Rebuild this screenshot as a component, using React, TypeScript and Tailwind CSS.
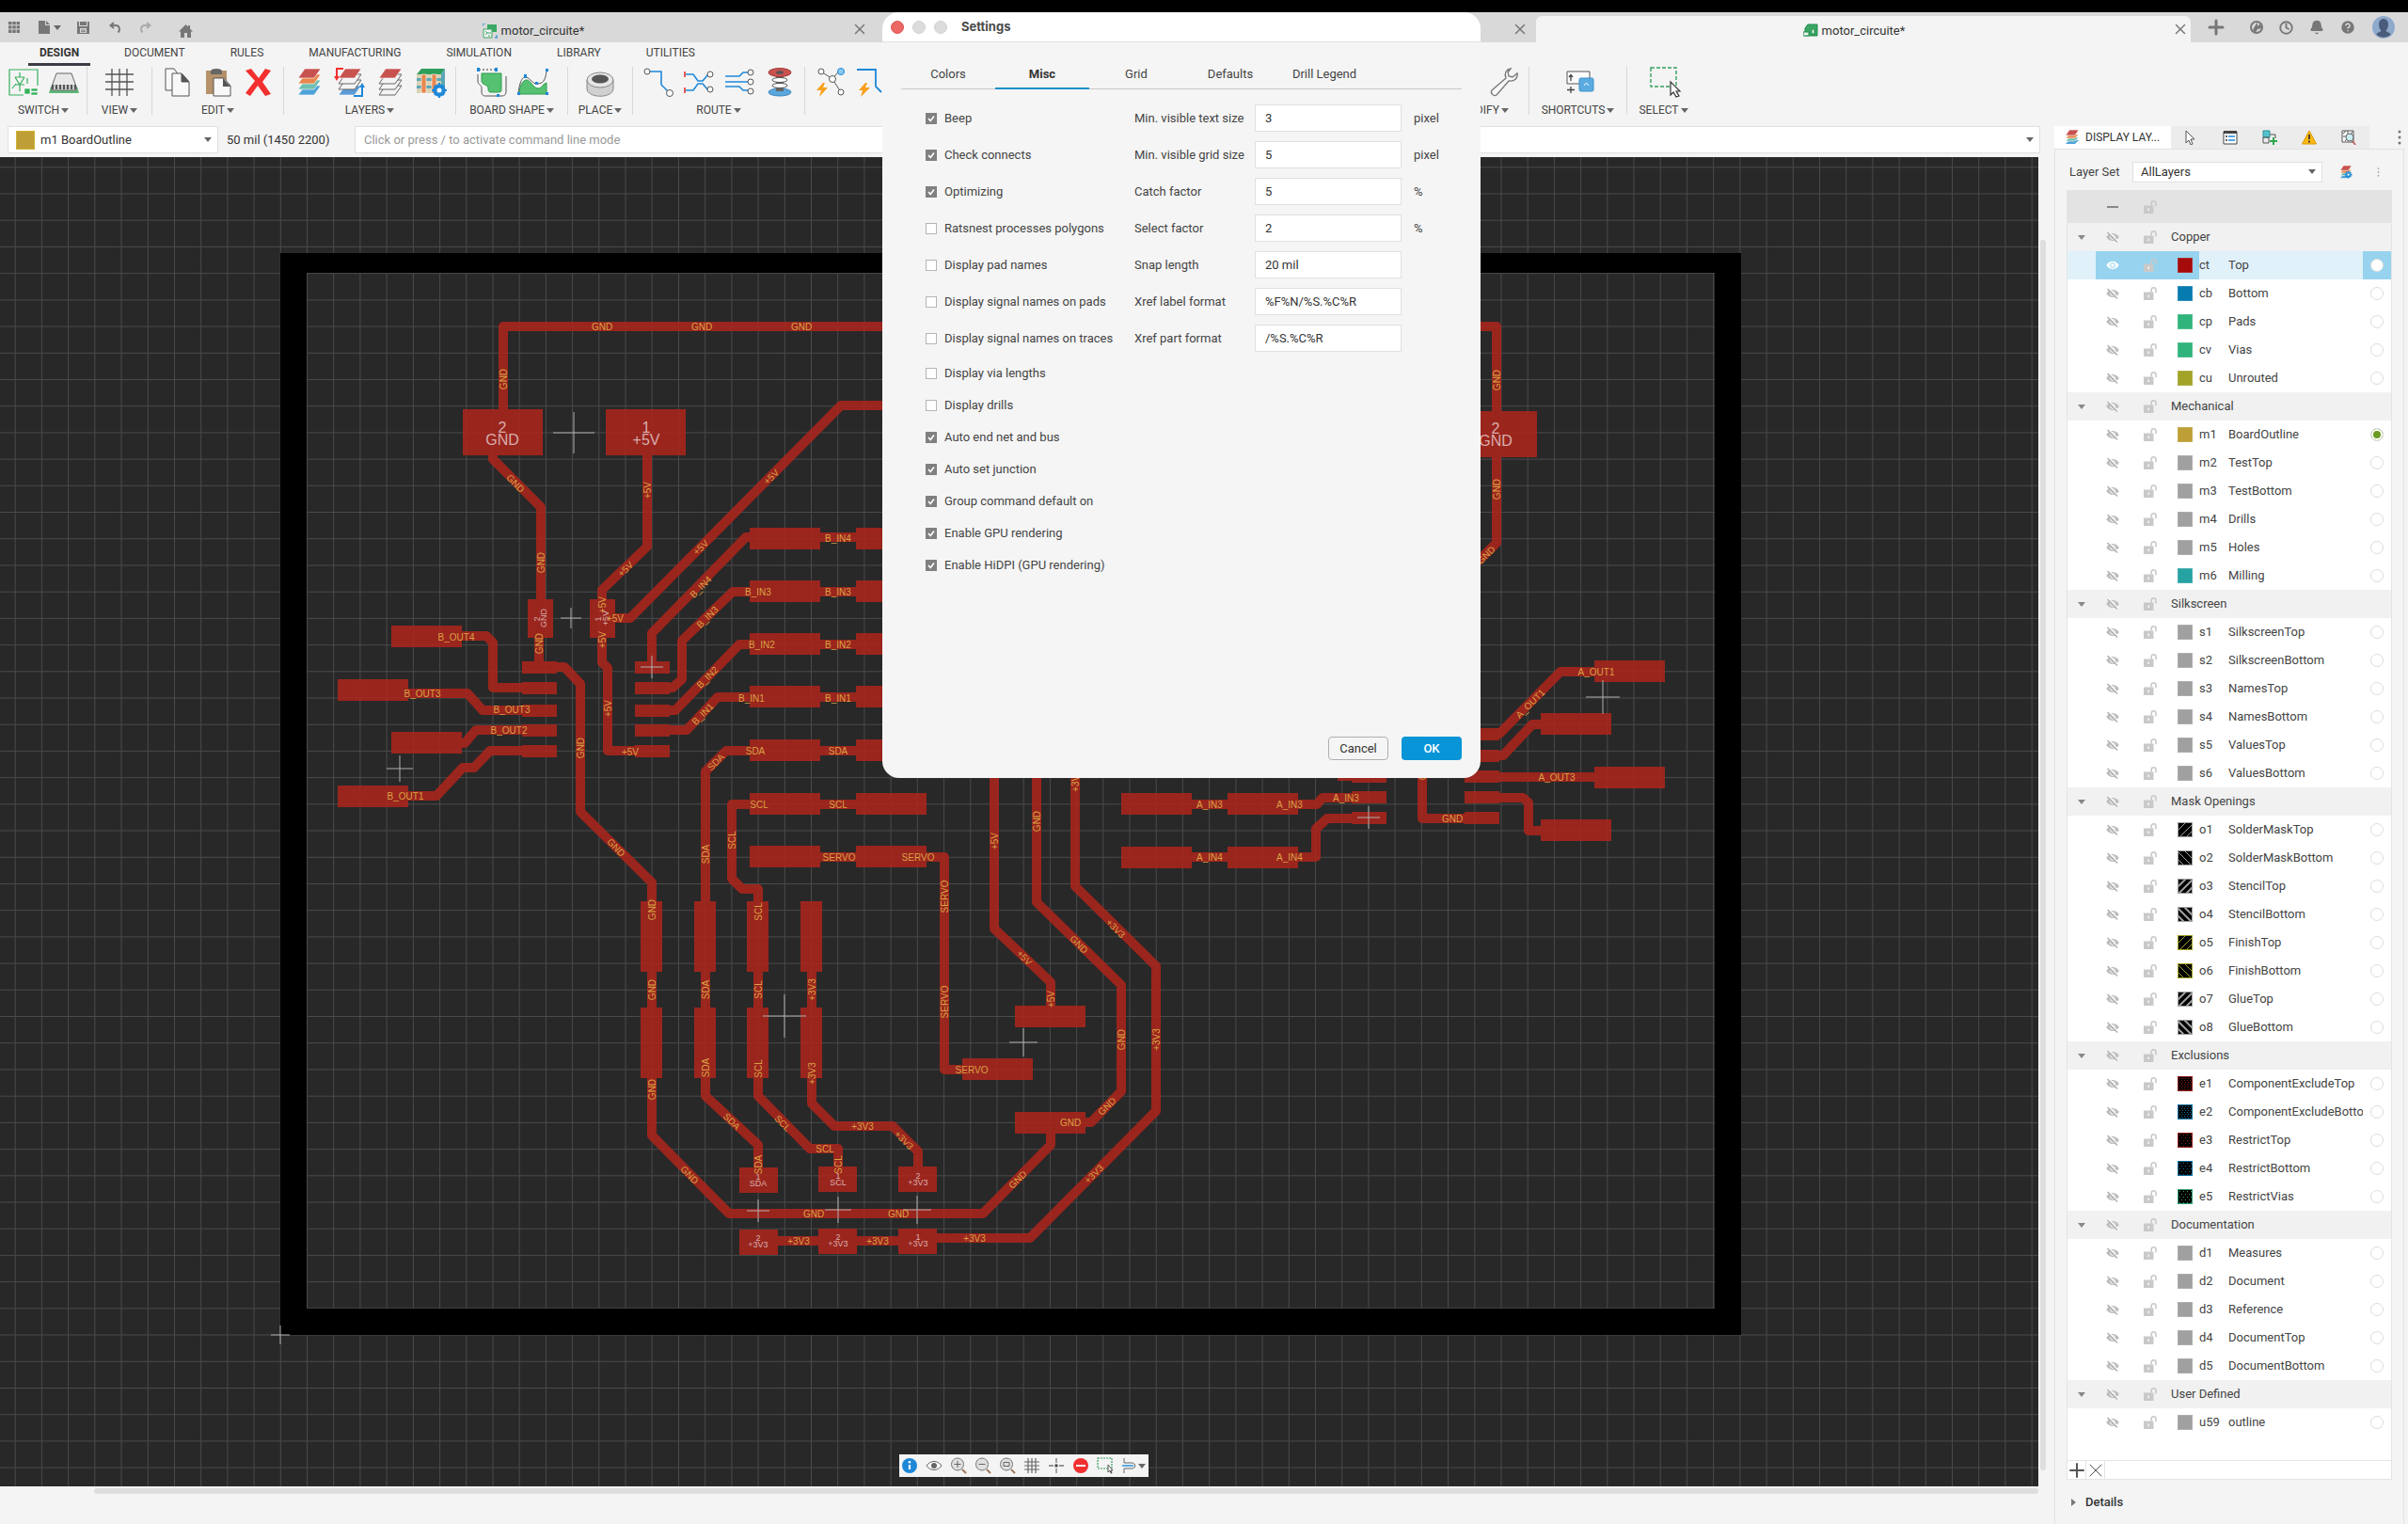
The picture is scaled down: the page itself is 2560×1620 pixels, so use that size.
import React from 'react';
import { Clock, HelpCircle, Bell, Plus, X } from 'lucide-react';

type Swatch = { color: string; kind?: 'solid' | 'slash' | 'backslash' | 'slashWide' | 'backslashWide' | 'dots' | 'dotsSparse' };
type Layer = { code: string; name: string; swatch: Swatch };
type LayerGroup = { name: string; layers: Layer[] };
type Label = [number, number, number, string];

const GRAY = '#a0a0a0';

const solid = (code: string, name: string, color = GRAY): Layer => ({ code, name, swatch: { color, kind: 'solid' } });

const layerGroups: LayerGroup[] = [
  {
    name: 'Copper',
    layers: [
      solid('ct', 'Top', '#a50b0b'),
      solid('cb', 'Bottom', '#067bb0'),
      solid('cp', 'Pads', '#31b37c'),
      solid('cv', 'Vias', '#31b37c'),
      solid('cu', 'Unrouted', '#a3a328'),
    ],
  },
  {
    name: 'Mechanical',
    layers: [
      solid('m1', 'BoardOutline', '#bd9f36'),
      solid('m2', 'TestTop'),
      solid('m3', 'TestBottom'),
      solid('m4', 'Drills'),
      solid('m5', 'Holes'),
      solid('m6', 'Milling', '#27a2a2'),
    ],
  },
  {
    name: 'Silkscreen',
    layers: [
      solid('s1', 'SilkscreenTop'),
      solid('s2', 'SilkscreenBottom'),
      solid('s3', 'NamesTop'),
      solid('s4', 'NamesBottom'),
      solid('s5', 'ValuesTop'),
      solid('s6', 'ValuesBottom'),
    ],
  },
  {
    name: 'Mask Openings',
    layers: [
      { code: 'o1', name: 'SolderMaskTop', swatch: { color: GRAY, kind: 'slash' } },
      { code: 'o2', name: 'SolderMaskBottom', swatch: { color: GRAY, kind: 'backslash' } },
      { code: 'o3', name: 'StencilTop', swatch: { color: GRAY, kind: 'slashWide' } },
      { code: 'o4', name: 'StencilBottom', swatch: { color: GRAY, kind: 'backslashWide' } },
      { code: 'o5', name: 'FinishTop', swatch: { color: '#a3a328', kind: 'slash' } },
      { code: 'o6', name: 'FinishBottom', swatch: { color: '#a3a328', kind: 'backslash' } },
      { code: 'o7', name: 'GlueTop', swatch: { color: GRAY, kind: 'slashWide' } },
      { code: 'o8', name: 'GlueBottom', swatch: { color: GRAY, kind: 'backslashWide' } },
    ],
  },
  {
    name: 'Exclusions',
    layers: [
      { code: 'e1', name: 'ComponentExcludeTop', swatch: { color: '#8f1a1a', kind: 'dots' } },
      { code: 'e2', name: 'ComponentExcludeBottom', swatch: { color: '#0d6f9e', kind: 'dots' } },
      { code: 'e3', name: 'RestrictTop', swatch: { color: '#8f1a1a', kind: 'dotsSparse' } },
      { code: 'e4', name: 'RestrictBottom', swatch: { color: '#0d6f9e', kind: 'dotsSparse' } },
      { code: 'e5', name: 'RestrictVias', swatch: { color: '#31a070', kind: 'dotsSparse' } },
    ],
  },
  {
    name: 'Documentation',
    layers: [
      solid('d1', 'Measures'),
      solid('d2', 'Document'),
      solid('d3', 'Reference'),
      solid('d4', 'DocumentTop'),
      solid('d5', 'DocumentBottom'),
    ],
  },
  { name: 'User Defined', layers: [solid('u59', 'outline')] },
];

/* ---------- small icons ---------- */

const Caret = ({ className = 'text-[#666]' }: { className?: string }) => (
  <svg viewBox="0 0 8 5" className={`w-2 h-[5px] shrink-0 ${className}`} fill="currentColor">
    <path d="M0 0h8L4 5z" />
  </svg>
);

const EyeOff = () => (
  <svg viewBox="0 0 14 12" className="w-3.5 h-3 mx-auto" fill="none">
    <path d="M7 2c3 0 5.500 2 6.800 4C12.500 8 10 10 7 10S1.500 8 .2 6C1.500 4 4 2 7 2z" fill="#bdbdbd" />
    <circle cx="7" cy="6" r="2.300" stroke="#fff" strokeWidth="1" />
    <path d="M2.500 .5l10.500 10.500" stroke="#fff" strokeWidth="1.600" />
    <path d="M1.500 1l10.500 10.500" stroke="#adadad" strokeWidth="1.400" />
  </svg>
);

const EyeOn = () => (
  <svg viewBox="0 0 14 12" className="w-3.5 h-3 mx-auto" fill="none">
    <path d="M7 1.800c3 0 5.200 2 6.600 4.200C12.200 8.200 10 10.200 7 10.200S1.800 8.200.4 6C1.800 3.800 4 1.800 7 1.800z" fill="#fff" />
    <circle cx="7" cy="6" r="2.500" stroke="#97d3ee" strokeWidth="1" />
  </svg>
);

const Unlock = () => (
  <svg viewBox="0 0 14 14" className="w-3.5 h-3.5 mx-auto" fill="none">
    <path d="M0 5.500h10.500V14H0z" fill="#c9c9c9" />
    <path d="M8.200 5.500V3.200a2.400 2.400 0 0 1 4.800 0v3" stroke="#c9c9c9" strokeWidth="1.600" />
    <path d="M5.200 8.500v2.500" stroke="#fff" strokeWidth="1.300" />
  </svg>
);

const SwatchIcon = ({ swatch }: { swatch: Swatch }) => {
  const { color, kind } = swatch;
  const dots: string[] = [];
  const step = kind === 'dots' ? 3 : 4;
  for (let y = 2, row = 0; y < 15; y += step - 1, row++) {
    for (let x = row % 2 ? 4 : 2; x < 15; x += step) dots.push(`M${x} ${y}h1v1h-1z`);
  }
  return (
    <svg viewBox="0 0 16 16" className="w-4 h-4 mx-auto">
      <rect width="16" height="16" fill={kind === 'solid' ? color : '#000'} />
      {kind === 'slash' && <path d="M1 8l7-7M3 15L15 3M10 15l5-5" stroke={color} strokeWidth="1" />}
      {kind === 'backslash' && <path d="M8 1l7 7M1 2l13 13M1 10l5 5" stroke={color} strokeWidth="1" />}
      {kind === 'slashWide' && <path d="M0 9l9-9M1 16L16 1M9 16l7-7" stroke={color} strokeWidth="2" />}
      {kind === 'backslashWide' && <path d="M7 0l9 9M0 1l15 15M0 9l7 7" stroke={color} strokeWidth="2" />}
      {(kind === 'dots' || kind === 'dotsSparse') && <path d={dots.join('')} fill={color} />}
      <rect x=".5" y=".5" width="15" height="15" fill="none" stroke={kind === 'solid' ? 'rgba(255,255,255,.15)' : color} />
    </svg>
  );
};

const BoardFileIcon = ({ filled }: { filled?: boolean }) => (
  <svg viewBox="0 0 16 16" className="w-4 h-4 shrink-0" fill="none">
    {filled ? (
      <>
        <path d="M5 1h10v12H2V5z" fill="#3aa765" stroke="#1f8a4a" />
        <path d="M0 9h6v4H0zM9 6h3v5H9z" fill="#e8f5ec" stroke="#1f8a4a" />
      </>
    ) : (
      <>
        <path d="M5 1h10v8H5z" fill="#3aa765" />
        <path d="M1 6h9v9H1z" fill="#f4f4f4" stroke="#3aa765" />
        <path d="M3 8l2 2-2 2M5 10h4M7 12v2" stroke="#3aa765" />
        <path d="M0 0h3M0 0v3M13 15h3M15 12v3" stroke="#1e88d8" />
      </>
    )}
  </svg>
);

const LayerStack = ({ colors, children }: { colors: string[]; children?: React.ReactNode }) => (
  <g>
    {colors.map((c, i) => {
      const y = 24 - i * 6;
      return <path key={i} d={`M4 ${y + 6}l7-10h17l-7 10z`} fill={c} stroke={c === '#f4f4f4' ? '#666' : '#fff'} strokeWidth={c === '#f4f4f4' ? 1 : 0.6} />;
    })}
    {children}
  </g>
);

/* toolbar drawings, all on a 32x32 box */
const icons: Record<string, React.ReactNode> = {
  schematic: (
    <g stroke="#35b05c" fill="none" strokeWidth="1.200">
      <path d="M31 20V3H1v27h15" />
      <path d="M12 6v5M7 11h10M7 11l5 8 5-8M7 19h10M12 19v7M4 23l4-5M20 12v6" />
      <path d="M17 23h6v6h-6zM24 23h7v3h-7zM24 27h7v3h-7z" fill="#35b05c" stroke="#fff" strokeWidth=".6" />
    </g>
  ),
  board: (
    <g>
      <path d="M2 21h28l2 7H0z" fill="#5cb878" />
      <path d="M8 7h16l5 14v4H3v-4z" fill="#e8e8e8" stroke="#666" />
      <path d="M3 19h26v5H3z" fill="#555" />
      <path d="M6 18v6M10 18v6M14 18v6M18 18v6M22 18v6M26 18v6" stroke="#eee" strokeWidth="1.500" />
    </g>
  ),
  grid: <path d="M8 2v29M16 2v29M24 2v29M1 8h30M1 16h30M1 24h30" stroke="#555" strokeWidth="1.300" />,
  copy: (
    <g fill="#f8f8f8" stroke="#555">
      <path d="M3 2h9l5 7v16H3z" />
      <path d="M10 7h10l8 9v15H10z" />
      <path d="M20 7v9h8z" fill="#555" />
    </g>
  ),
  paste: (
    <g>
      <path d="M3 4h22v25H3z" fill="#b5926a" />
      <path d="M8 5c0-2 2-3 6-3s6 1 6 3v3H8z" fill="#666" />
      <path d="M11 12h11l7 8v11H11z" fill="#f8f8f8" stroke="#555" />
      <path d="M21 12v9h8z" fill="#555" />
    </g>
  ),
  delete: <path d="M2 4l6-2 8 10 7-10 6 2-9 12 9 13-6 2-8-11-8 11-5-3 10-13z" fill="#f2302f" />,
  stackAll: <LayerStack colors={['#4da3d8', '#6fbfb0', '#e8874e', '#c8524f']} />,
  stackFlip: (
    <LayerStack colors={['#5b9bd5', '#f4f4f4', '#f4f4f4', '#c8524f']}>
      <path d="M9 2H2v11" stroke="#f2302f" strokeWidth="2" fill="none" />
      <path d="M-1 10h6l-3 5z" fill="#f2302f" />
      <path d="M20 31h9V21" stroke="#1e88d8" strokeWidth="2" fill="none" />
      <path d="M26 22h6l-3-5z" fill="#1e88d8" />
    </LayerStack>
  ),
  stackTop: <LayerStack colors={['#f4f4f4', '#f4f4f4', '#f4f4f4', '#c8524f']} />,
  stackup: (
    <g>
      <path d="M1 8l5-6h25l-4 6z" fill="#2e9e5b" />
      <path d="M1 8h26v20H1z" fill="#d9d2b4" />
      <path d="M27 8l4-6v19l-4 7z" fill="#5aa7b5" />
      <path d="M1 12h26v3H1zM1 20h26v3H1z" fill="#5aa7b5" />
      <path d="M6 8h5v20H6zM17 8h5v20h-5z" fill="#e8874e" stroke="#fff" strokeWidth=".6" />
      <circle cx="25" cy="25" r="5" fill="none" stroke="#1e88d8" strokeWidth="3.500" />
      <path d="M25 17v16M17 25h16M20 20l10 10M30 20L20 30" stroke="#1e88d8" strokeWidth="2" />
      <circle cx="25" cy="25" r="2.500" fill="#fff" />
    </g>
  ),
  outline: (
    <g>
      <path d="M1 8v7c0 5 4 3 4 8v4c0 4 3 4 5 4h16c4 0 5-2 5-5V10" stroke="#555" fill="none" />
      <path d="M5 7h21v18c0 2-2 2-4 2h-7c-3 0-3-2-3-4 0-5-7-3-7-8z" fill="#56c271" stroke="#2f9950" />
      <path d="M2 3h18" stroke="#333" strokeDasharray="2 2" />
      <path d="M0 1h3v4H0zM19 1h3v4h-3zM21 29h3v3h-3z" fill="#1e88d8" />
    </g>
  ),
  polygon: (
    <g>
      <path d="M2 29C2 20 6 14 10 14s7 9 12 9c4 0 4-4 9-6v12z" fill="#56c271" stroke="#2f9950" />
      <path d="M1 29C2 16 6 9 10 11s6 7 11 7c6 0 9-3 10-14" stroke="#555" fill="none" />
      <path d="M0 27h3v3H0zM7 8h3v4H7zM19 16h3v3h-3zM30 2h3v3h-3zM30 27h3v3h-3z" fill="#1e88d8" />
    </g>
  ),
  via: (
    <g>
      <path d="M2 14v9c0 11 28 11 28 0v-9z" fill="#d0d0d0" stroke="#888" />
      <ellipse cx="16" cy="14" rx="14" ry="8" fill="#e6e6e6" stroke="#888" />
      <ellipse cx="16" cy="13" rx="9" ry="4.500" fill="#555" />
    </g>
  ),
  route: (
    <g>
      <path d="M4 5h15v14l8 8" fill="none" stroke="#1e88d8" strokeWidth="1.600" />
      <circle cx="4" cy="5" r="3" fill="#fff" stroke="#555" />
      <circle cx="28" cy="28" r="3.500" fill="#fff" stroke="#555" />
    </g>
  ),
  diffPair: (
    <g fill="none">
      <path d="M2 8h8l5 7h5l6-7M2 25h8l5-7h5l6 7" stroke="#1e88d8" strokeWidth="1.600" />
      <path d="M1 5v6M1 22v6" stroke="#e33" strokeWidth="1.600" />
      <circle cx="28" cy="8" r="3" fill="#fff" stroke="#555" />
      <circle cx="28" cy="24" r="3" fill="#fff" stroke="#555" />
    </g>
  ),
  multiRoute: (
    <g fill="none">
      <path d="M1 10h15l4-4h6M1 16h24M1 21h15l4 4h6" stroke="#1e88d8" strokeWidth="1.600" />
      <circle cx="28" cy="6" r="3" fill="#fff" stroke="#555" />
      <circle cx="28" cy="16" r="3" fill="#fff" stroke="#555" />
      <circle cx="28" cy="26" r="3" fill="#fff" stroke="#555" />
    </g>
  ),
  viaStack: (
    <g>
      <ellipse cx="16" cy="27" rx="12" ry="4" fill="#5aa7dd" stroke="#3a87bd" />
      <path d="M12 8h8v18h-8z" fill="#666" />
      <ellipse cx="16" cy="20" rx="8" ry="2.500" fill="#fff" stroke="#555" />
      <ellipse cx="16" cy="14" rx="8" ry="2.500" fill="#fff" stroke="#555" />
      <ellipse cx="16" cy="6" rx="12" ry="4.500" fill="#c8524f" stroke="#a33c3a" />
      <ellipse cx="16" cy="6" rx="4" ry="1.800" fill="#555" />
    </g>
  ),
  ratsnest: (
    <g>
      <path d="M6 5l12 8 8-10M18 13l9 14" stroke="#555" fill="none" />
      <circle cx="6" cy="5" r="3" fill="#fff" stroke="#555" />
      <circle cx="18" cy="13" r="3.500" fill="#fff" stroke="#555" />
      <circle cx="27" cy="5" r="3.500" fill="#8cc8f0" stroke="#1e88d8" />
      <circle cx="27" cy="27" r="3" fill="#fff" stroke="#555" />
      <path d="M8 17L1 25h5l-2 7 9-10H8l2-5z" fill="#f9a11b" />
    </g>
  ),
  quickRoute: (
    <g>
      <path d="M1 3h20v18l6 6" stroke="#1e88d8" strokeWidth="1.800" fill="none" />
      <path d="M10 17l-7 8h4l-2 7 10-10h-5l2-5z" fill="#f9a11b" />
    </g>
  ),
  wrench: (
    <path
      d="M22 2c-5 1-7 5-5 10L2 25c-2 3 2 7 5 5l13-15c6 1 10-3 9-8l-5 4-4-1-1-4z"
      fill="#f8f8f8"
      stroke="#777"
      strokeWidth="1.300"
      transform="translate(1 0)"
    />
  ),
  shortcuts: (
    <g>
      <path d="M17 18H4V5h24v8" fill="#fbfbfb" stroke="#555" />
      <path d="M8 15V8M6 11l2-2.500L10 11M8 21v7M4 24.500h8" stroke="#444" strokeWidth="1.300" fill="none" />
      <rect x="17" y="12" width="15" height="14" rx="1.500" fill="#5aabe0" stroke="#3f92c8" />
      <path d="M22 20l2.500-3 2.500 3" stroke="#fff" fill="none" />
    </g>
  ),
  select: (
    <g>
      <path d="M2 1h27v20H2z" fill="none" stroke="#35a05c" strokeWidth="1.400" strokeDasharray="4 2" />
      <path d="M23 16v14l3-3 3 5 3-1-3-5h4z" fill="#fff" stroke="#333" strokeWidth="1.200" />
    </g>
  ),
};

type ToolGroup = { label: string; width: string; icons: string[] };

const toolGroups: ToolGroup[] = [
  { label: 'SWITCH', width: 'w-[93px]', icons: ['schematic', 'board'] },
  { label: 'VIEW', width: 'w-[69px]', icons: ['grid'] },
  { label: 'EDIT', width: 'w-[140px]', icons: ['copy', 'paste', 'delete'] },
  { label: 'LAYERS', width: 'w-[183px]', icons: ['stackAll', 'stackFlip', 'stackTop', 'stackup'] },
  { label: 'BOARD SHAPE', width: 'w-[119px]', icons: ['outline', 'polygon'] },
  { label: 'PLACE', width: 'w-[69px]', icons: ['via'] },
  { label: 'ROUTE', width: 'w-[183px]', icons: ['route', 'diffPair', 'multiRoute', 'viaStack'] },
  { label: 'REWORK', width: 'w-[226px]', icons: ['ratsnest', 'quickRoute', 'route', 'diffPair', 'multiRoute'] },
  { label: 'QUICK ROUTE', width: 'w-[447px]', icons: ['route', 'polygon', 'via'] },
  { label: 'MODIFY', width: 'w-[97px]', icons: ['copy', 'wrench'] },
  { label: 'SHORTCUTS', width: 'w-[104px]', icons: ['shortcuts'] },
  { label: 'SELECT', width: 'w-[78px]', icons: ['select'] },
];

const menuItems = ['DESIGN', 'DOCUMENT', 'RULES', 'MANUFACTURING', 'SIMULATION', 'LIBRARY', 'UTILITIES'];

/* ---------- header ---------- */

const DocTab = ({ title, active, filled }: { title: string; active?: boolean; filled?: boolean }) => (
  <div className={`flex-1 min-w-0 flex items-center mt-1 rounded-t-md ${active ? 'bg-[#f4f4f4] pr-0.5' : 'pr-2'}`}>
    <button className="flex-1 flex items-center justify-center gap-1 pt-1">
      <BoardFileIcon filled={filled} />
      <span className="text-[13px] leading-4 text-[#333]">{title}</span>
    </button>
    <button aria-label={`Close ${title}`}>
      <X className="w-[18px] h-[18px] text-[#777]" strokeWidth={2} />
    </button>
  </div>
);

const TitleBar = () => (
  <header className="flex h-8 bg-[#d9d9d9] text-[#777]">
    <div className="w-[229px] shrink-0 flex items-center pl-[9px]">
      <button aria-label="Data panel" className="w-8">
        <svg viewBox="0 0 12 12" className="w-3 h-3" fill="currentColor">
          <path d="M0 0h3.500v3.200H0zM4.300 0h3.500v3.200H4.300zM8.600 0H12v3.200H8.600zM0 4.300h3.500v3.200H0zM4.300 4.300h3.500v3.200H4.300zM8.600 4.300H12v3.200H8.600zM0 8.600h3.500V12H0zM4.300 8.600h3.500V12H4.300zM8.600 8.600H12V12H8.600z" />
        </svg>
      </button>
      <button aria-label="File" className="w-[41px] flex items-center gap-1">
        <svg viewBox="0 0 12 14" className="w-3 h-3.5" fill="currentColor">
          <path d="M0 0h7v5h5v9H0zM8 0l4 4H8z" />
        </svg>
        <Caret />
      </button>
      <button aria-label="Save" className="w-[34px]">
        <svg viewBox="0 0 13 13" className="w-[13px] h-[13px]" fill="currentColor" fillRule="evenodd">
          <path d="M0 0h2v5h9V0h2v13H0zM3 0h7v4H3zM3 7v5h7V7zM4 8.500h5v1H4zM4 10.200h5v1H4z" />
        </svg>
      </button>
      <button aria-label="Undo" className="w-[33px]">
        <svg viewBox="0 0 12 12" className="w-3 h-3" fill="none" stroke="currentColor" strokeWidth="2">
          <path d="M5 1L1.500 4 5 7M2 4h5c3 0 4 2 4 4.500 0 1-.5 2-1.500 3" />
        </svg>
      </button>
      <button aria-label="Redo" className="w-[41px] text-[#aaa]">
        <svg viewBox="0 0 12 12" className="w-3 h-3" fill="none" stroke="currentColor" strokeWidth="2">
          <path d="M7 1l3.500 3L7 7M10 4H5C2 4 1 6 1 8.500c0 1 .5 2 1.500 3" />
        </svg>
      </button>
      <button aria-label="Home" className="pt-2">
        <svg viewBox="0 0 15 14" className="w-[15px] h-3.5" fill="currentColor">
          <path d="M7.500 0L0 7.500h2V14h4V9h3v5h4V7.500h2L12 4.500V1h-2v1.500z" />
        </svg>
      </button>
    </div>
    <DocTab title="motor_circuite*" />
    <DocTab title="motor_circuite*" />
    <DocTab title="motor_circuite*" active filled />
    <div className="w-[231px] shrink-0 flex items-center pl-[15px]">
      <button aria-label="New tab" className="w-[47px]">
        <Plus className="w-6 h-6" strokeWidth={3} />
      </button>
      <button aria-label="Extensions" className="w-8">
        <svg viewBox="0 0 16 16" className="w-4 h-4">
          <circle cx="8" cy="8" r="6" fill="none" stroke="#777" strokeWidth="2" />
          <path d="M9 2.500v4.500l3-3 1.500 5-4.500 1-2 3.500-3-2.500 2-4z" fill="#777" />
        </svg>
      </button>
      <button aria-label="Job status" className="w-8">
        <Clock className="w-[15px] h-[15px]" strokeWidth={3} />
      </button>
      <button aria-label="Notifications" className="w-8">
        <Bell className="w-4 h-4" fill="currentColor" />
      </button>
      <button aria-label="Help" className="w-[35px]">
        <HelpCircle className="w-[18px] h-[18px]" fill="#777" stroke="#d9d9d9" />
      </button>
      <button aria-label="Account">
        <svg viewBox="0 0 24 24" className="w-6 h-6">
          <circle cx="12" cy="12" r="12" fill="#8fa9cc" />
          <path d="M7 9c0-8 10-8 10 0 0 3-1 5-2.500 6.500 1 2 4.500 1.500 5 4.500a12 12 0 0 1-15 0c.5-3 4-2.500 5-4.500C8 14 7 12 7 9z" fill="#4a5c7a" />
        </svg>
      </button>
    </div>
  </header>
);

const Ribbon = () => (
  <div className="bg-[#f4f4f4]">
    <nav className="flex h-[25px] pl-[30px] gap-6">
      {menuItems.map((item, i) => (
        <button
          key={item}
          className={`px-3 text-xs border-b-3 ${i === 0 ? 'font-bold text-[#333] border-[#3c3c46]' : 'text-[#444] border-transparent'}`}
        >
          {item}
        </button>
      ))}
    </nav>
    <div className="flex h-[52px]">
      {toolGroups.map((group) => (
        <div
          key={group.label}
          className={`${group.width} shrink-0 mt-px border-r border-[#d8d8d8] last:border-transparent flex flex-col items-center`}
        >
          <div className="flex gap-[11px]">
            {group.icons.map((name) => (
              <button key={name} aria-label={name}>
                <svg viewBox="0 0 32 32" className="w-8 h-8 overflow-visible">
                  {icons[name]}
                </svg>
              </button>
            ))}
          </div>
          <button className="mt-1.5 flex items-center gap-0.5 text-xs leading-4 text-[#444] whitespace-nowrap">
            {group.label}
            <Caret />
          </button>
        </div>
      ))}
    </div>
  </div>
);

const CommandBar = () => (
  <div className="flex h-[45px] pt-3 pl-2 pr-[15px] text-[13px] text-[#333]">
    <div className="relative w-56 h-[29px] flex items-center bg-white border border-[#e0e0e0]">
      <span className="absolute left-2 w-5 h-5 bg-[#bd9f36] border border-[#d2b232]" />
      <select aria-label="Active layer" className="w-full h-full appearance-none pl-[34px] bg-transparent" defaultValue="m1">
        <option value="m1">m1 BoardOutline</option>
      </select>
      <span className="absolute right-1.5">
        <Caret />
      </span>
    </div>
    <span className="w-[145px] pl-[9px] h-[29px] leading-[29px]">50 mil (1450 2200)</span>
    <div className="relative flex-1 h-[29px] flex items-center bg-white border border-[#e0e0e0]">
      <input
        aria-label="Command line"
        className="w-full h-full pl-[9px] bg-transparent placeholder:text-[#999] outline-none"
        placeholder="Click or press / to activate command line mode"
      />
      <span className="absolute right-1.5">
        <Caret />
      </span>
    </div>
  </div>
);

/* ---------- board canvas ---------- */

const GRID = 28.21;
const gridPath = [
  ...Array.from({ length: 78 }, (_, i) => `M${(16.2 + i * GRID).toFixed(1)} 167V1600`),
  ...Array.from({ length: 52 }, (_, i) => `M0 ${(177.8 + i * GRID).toFixed(1)}H2200`),
].join('');

// polylines drawn with the common trace width
const traces = [
  'M535 440V347H1591V440M1591 480V577L1560 608',
  'M524 480V488L575 539V640M573 670V709',
  'M688 480V581L640 627V640M640 676V704L646 710V798H680M650 657H670L894 431H960',
  'M693 709V673L793 571H910',
  'M710 731H715L725 722V681L779 629H910',
  'M710 755H718L786 685H910',
  'M710 776H730L763 741H910',
  'M910 798H772L750 820V960',
  'M490 676H517L524 683V731H560',
  'M430 737H497L513 755H560',
  'M488 790H494L506 776H560',
  'M430 846H464L492 816H504L521 798H560',
  'M590 709H600L617 727V863L693 938V960M693 1030V1075M693 1140V1207L775 1290H1045L1117 1217V1200',
  'M750 1030V1075M750 1140V1165L806 1217V1245',
  'M915 855H778V934L789 945H806V960M806 1030V1075M806 1140V1165L861 1221H891V1245',
  'M863 1030V1075M863 1140V1173L887 1197H949L976 1224V1245',
  'M870 911H1004V1137H1030',
  'M1057 820V987L1117 1044V1072',
  'M1102 820V959L1192 1047V1160L1160 1193H1150',
  'M820 1319H960M990 1316H1095L1229 1181V1027L1143 942V820',
  'M1265 855H1400L1406 848H1440M1265 911H1399V881L1411 870H1440',
  'M1422 825H1440M1512 815V870H1560',
  'M1570 780H1594L1659 714H1700M1570 803H1598L1629 770H1642',
  'M1590 826H1700M1590 848H1619L1625 853V883H1642',
].join('');

// x, y, width, height
const pads: [number, number, number, number][] = [
  [492, 435, 85, 49], [644, 435, 85, 49], [1549, 437, 85, 49],
  [561, 637, 27, 41], [627, 637, 27, 41],
  ...[709, 731, 755, 776, 798].flatMap((y): [number, number, number, number][] => [[555, y - 6, 37, 13], [675, y - 6, 37, 13]]),
  ...[573, 629, 685, 741, 798, 855, 911].flatMap((y): [number, number, number, number][] => [[797, y - 12, 75, 23], [910, y - 12, 75, 23]]),
  [416, 665, 75, 23], [359, 722, 75, 23], [416, 778, 75, 23], [359, 835, 75, 23],
  ...[693, 750, 806, 863].flatMap((x): [number, number, number, number][] => [[x - 12, 958, 23, 75], [x - 12, 1071, 23, 75]]),
  [786, 1241, 41, 27], [870, 1240, 41, 27], [955, 1240, 41, 27],
  [786, 1307, 41, 27], [870, 1306, 41, 27], [955, 1306, 41, 27],
  [1023, 1125, 75, 23], [1079, 1069, 75, 23], [1079, 1182, 75, 23],
  [1192, 843, 75, 23], [1305, 843, 75, 23], [1192, 900, 75, 23], [1305, 900, 75, 23],
  [1437, 819, 37, 13], [1437, 841, 37, 13], [1437, 863, 37, 13],
  [1557, 774, 37, 13], [1557, 797, 37, 13], [1557, 819, 37, 13], [1557, 841, 37, 13], [1557, 863, 37, 13],
  [1695, 702, 75, 23], [1638, 758, 75, 23], [1695, 815, 75, 23], [1638, 871, 75, 23],
];

// centre x, centre y, rotation, net name
const netLabels: Label[] = [
  [640, 347, 0, 'GND'], [746, 347, 0, 'GND'], [852, 347, 0, 'GND'], [535, 403, -90, 'GND'],
  [548, 514, 45, 'GND'], [575, 598, -90, 'GND'], [573, 684, -90, 'GND'], [617, 795, -90, 'GND'],
  [688, 521, -90, '+5V'], [665, 605, -45, '+5V'], [820, 507, -45, '+5V'], [745, 582, -45, '+5V'],
  [640, 643, -90, '+5V'], [654, 657, 0, '+5V'], [640, 680, -90, '+5V'], [646, 753, -90, '+5V'], [670, 799, 0, '+5V'],
  [745, 624, -45, 'B_IN4'], [891, 572, 0, 'B_IN4'], [752, 656, -45, 'B_IN3'], [806, 629, 0, 'B_IN3'], [891, 629, 0, 'B_IN3'],
  [752, 720, -45, 'B_IN2'], [810, 685, 0, 'B_IN2'], [891, 685, 0, 'B_IN2'],
  [747, 759, -45, 'B_IN1'], [799, 742, 0, 'B_IN1'], [891, 742, 0, 'B_IN1'],
  [485, 677, 0, 'B_OUT4'], [449, 737, 0, 'B_OUT3'], [544, 754, 0, 'B_OUT3'], [541, 776, 0, 'B_OUT2'], [431, 846, 0, 'B_OUT1'],
  [803, 798, 0, 'SDA'], [891, 798, 0, 'SDA'], [761, 810, -45, 'SDA'],
  [807, 855, 0, 'SCL'], [891, 855, 0, 'SCL'], [778, 893, -90, 'SCL'], [750, 908, -90, 'SDA'],
  [655, 901, 45, 'GND'], [693, 967, -90, 'GND'], [693, 1052, -90, 'GND'], [693, 1158, -90, 'GND'],
  [750, 1052, -90, 'SDA'], [750, 1135, -90, 'SDA'], [806, 969, -90, 'SCL'], [806, 1052, -90, 'SCL'], [806, 1136, -90, 'SCL'],
  [863, 1052, -90, '+3V3'], [863, 1141, -90, '+3V3'],
  [892, 911, 0, 'SERVO'], [976, 911, 0, 'SERVO'], [1004, 953, -90, 'SERVO'], [1004, 1065, -90, 'SERVO'], [1033, 1137, 0, 'SERVO'],
  [778, 1192, 45, 'SDA'], [832, 1194, 45, 'SCL'], [733, 1249, 45, 'GND'], [877, 1221, 0, 'SCL'], [917, 1197, 0, '+3V3'],
  [961, 1212, 45, '+3V3'], [806, 1238, -90, 'SDA'], [891, 1238, -90, 'SCL'],
  [865, 1290, 0, 'GND'], [955, 1290, 0, 'GND'], [849, 1319, 0, '+3V3'], [933, 1319, 0, '+3V3'], [1036, 1316, 0, '+3V3'],
  [1057, 894, -90, '+5V'], [1102, 873, -90, 'GND'], [1143, 830, -90, '+3V3'], [1089, 1018, 45, '+5V'], [1117, 1062, -90, '+5V'],
  [1147, 1004, 45, 'GND'], [1186, 987, 45, '+3V3'], [1192, 1105, -90, 'GND'], [1229, 1105, -90, '+3V3'],
  [1138, 1193, 0, 'GND'], [1177, 1176, -45, 'GND'], [1082, 1254, -45, 'GND'], [1163, 1248, -45, '+3V3'],
  [1286, 855, 0, 'A_IN3'], [1371, 855, 0, 'A_IN3'], [1431, 848, 0, 'A_IN3'], [1286, 911, 0, 'A_IN4'], [1371, 911, 0, 'A_IN4'],
  [1512, 818, -90, 'GND'], [1544, 870, 0, 'GND'], [1655, 826, 0, 'A_OUT3'], [1697, 714, 0, 'A_OUT1'], [1627, 748, -45, 'A_OUT1'],
  [1591, 404, -90, 'GND'], [1591, 520, -90, 'GND'], [1580, 590, -45, 'GND'],
];

const padLabels: Label[] = [
  [534, 454, 0, '2'], [534, 467, 0, 'GND'], [687, 454, 0, '1'], [687, 467, 0, '+5V'], [1590, 455, 0, '2'], [1590, 468, 0, 'GND'],
];

const smallPadLabels: Label[] = [
  [571, 658, -90, '2'], [578, 657, -90, 'GND'], [636, 658, -90, '1'], [644, 657, -90, '+5V'],
  [806, 1251, 0, '1'], [806, 1258, 0, 'SDA'], [891, 1250, 0, '1'], [891, 1257, 0, 'SCL'], [976, 1250, 0, '2'], [976, 1257, 0, '+3V3'],
  [806, 1316, 0, '2'], [806, 1323, 0, '+3V3'], [891, 1315, 0, '2'], [891, 1322, 0, '+3V3'], [976, 1315, 0, '1'], [976, 1322, 0, '+3V3'],
];

// origin crosses: x, y, half size
const crosses: [number, number, number][] = [
  [610, 460, 22], [607, 657, 11], [693, 709, 12], [425, 817, 14], [298, 1419, 10], [834, 1080, 23], [1088, 1108, 15],
  [806, 1287, 12], [891, 1286, 14], [975, 1286, 15], [1704, 741, 18], [1455, 869, 12],
];

const Labels = ({ items, size, color }: { items: Label[]; size: number; color: string }) => (
  <g fill={color} fontSize={size} textAnchor="middle" dominantBaseline="central">
    {items.map(([x, y, angle, text], i) => (
      <text key={i} x={x} y={y} transform={angle ? `rotate(${angle} ${x} ${y})` : undefined}>
        {text}
      </text>
    ))}
  </g>
);

const BoardCanvas = () => (
  <svg
    viewBox="0 167 2167 1413"
    preserveAspectRatio="xMinYMin slice"
    className="absolute inset-0 w-full h-full [font-family:'Liberation_Sans',Arial,sans-serif]"
  >
    <path d={gridPath} stroke="#4a4a4a" fill="none" />
    <path d="M298 269H1851V1419H298zM326 290V1391H1823V290z" fill="#000" fillRule="evenodd" />
    <g opacity=".85">
      <path d={traces} fill="none" stroke="#ae251c" strokeWidth="10" strokeLinejoin="round" />
      {pads.map(([x, y, w, h], i) => (
        <rect key={i} x={x} y={y} width={w} height={h} fill="#ae251c" />
      ))}
    </g>
    <path d={crosses.map(([x, y, r]) => `M${x - r} ${y}h${2 * r}M${x} ${y - r}v${2 * r}`).join('')} stroke="#b0b0b0" fill="none" />
    <Labels items={netLabels} size={10} color="#dba243" />
    <Labels items={padLabels} size={16} color="#d9adab" />
    <Labels items={smallPadLabels} size={9} color="#d9adab" />
  </svg>
);

const viewTools: Record<string, React.ReactNode> = {
  Info: (
    <g>
      <circle cx="9" cy="9" r="8" fill="#1e88d8" />
      <path d="M9 8v5" stroke="#fff" strokeWidth="2.200" />
      <circle cx="9" cy="5.300" r="1.300" fill="#fff" />
    </g>
  ),
  Show: (
    <g>
      <path d="M1 9c4-6 12-6 16 0-4 6-12 6-16 0z" fill="#fff" stroke="#666" />
      <circle cx="9" cy="9" r="3" fill="#666" />
    </g>
  ),
  'Zoom in': (
    <g fill="none">
      <path d="M13 13l4 4" stroke="#a0785a" strokeWidth="2" />
      <circle cx="8" cy="7.500" r="6.500" fill="#e0e0e0" stroke="#777" />
      <path d="M8 4v7M4.500 7.500h7" stroke="#666" />
    </g>
  ),
  'Zoom out': (
    <g fill="none">
      <path d="M13 13l4 4" stroke="#a0785a" strokeWidth="2" />
      <circle cx="8" cy="7.500" r="6.500" fill="#e0e0e0" stroke="#777" />
      <path d="M4.500 7.500h7" stroke="#666" />
    </g>
  ),
  'Zoom to fit': (
    <g fill="none">
      <path d="M13 13l4 4" stroke="#a0785a" strokeWidth="2" />
      <circle cx="8" cy="7.500" r="6.500" fill="#e0e0e0" stroke="#777" />
      <path d="M5 5.500h6v4H5z" stroke="#666" />
    </g>
  ),
  Grid: <path d="M5 1v16M9 1v16M13 1v16M1 5h16M1 9h16M1 13h16" stroke="#666" strokeWidth="1.200" />,
  Origin: (
    <g>
      <path d="M9 1v5M9 12v5M1 9h5M12 9h5" stroke="#777" strokeWidth="1.300" />
      <path d="M7.500 7.500h3v3h-3z" fill="#444" />
    </g>
  ),
  Stop: (
    <g>
      <circle cx="9" cy="9" r="8" fill="#f2302f" />
      <path d="M4 9h10" stroke="#fff" strokeWidth="2" />
    </g>
  ),
  'Select area': (
    <g fill="none">
      <path d="M1 1h15v11H1z" stroke="#35a05c" strokeWidth="1.200" strokeDasharray="2 1" />
      <path d="M12 8v8l2-2 1 3h1l-1-3h2z" fill="#fff" stroke="#555" />
    </g>
  ),
};

const ViewToolbar = () => (
  <div className="absolute left-[956px] bottom-2.5 h-6 w-[265px] flex items-center gap-2 pl-0.5 bg-[#f4f4f4]">
    {Object.entries(viewTools).map(([name, drawing]) => (
      <button key={name} aria-label={name}>
        <svg viewBox="0 0 18 18" className="w-[18px] h-[18px]">
          {drawing}
        </svg>
      </button>
    ))}
    <button aria-label="Snap" className="flex items-center">
      <svg viewBox="0 0 18 18" className="w-[18px] h-[18px]" fill="none">
        <path d="M3 1v5h8c5 0 5 6 0 6H3v5" stroke="#666" />
        <path d="M1 9h12" stroke="#5aabe0" strokeWidth="2" />
      </svg>
      <Caret />
    </button>
  </div>
);

/* ---------- layer panel ---------- */

const Dots = ({ className }: { className: string }) => (
  <svg viewBox="0 0 4 16" className={className} fill="currentColor">
    <circle cx="2" cy="2" r="1.500" />
    <circle cx="2" cy="8" r="1.500" />
    <circle cx="2" cy="14" r="1.500" />
  </svg>
);

const MiniStack = ({ gear }: { gear?: boolean }) => (
  <svg viewBox="0 0 16 16" className={gear ? 'w-3.5 h-3.5' : 'w-4 h-4'}>
    <path d="M1 15l4-4h10l-4 4z" fill="#4da3d8" />
    <path d="M1 12l4-4h10l-4 4z" fill="#6fbfb0" stroke="#fff" strokeWidth=".6" />
    <path d="M1 9l4-4h10l-4 4z" fill="#e8874e" stroke="#fff" strokeWidth=".6" />
    <path d="M1 6l4-6h10l-4 6z" fill="#c8524f" stroke="#fff" strokeWidth=".6" />
    {gear && (
      <>
        <path d="M11 6.500v9M6.500 11h9M8 8l6 6M14 8l-6 6" stroke="#1e88d8" strokeWidth="1.800" />
        <circle cx="11" cy="11" r="1.300" fill="#fff" />
      </>
    )}
  </svg>
);

const panelTabs: Record<string, React.ReactNode> = {
  Inspector: <path d="M3 1v13l3-3 2 5 2-1-2-5h4z" fill="#fff" stroke="#555" />,
  'Selection filter': (
    <g>
      <path d="M1 2h14v13H1z" fill="#fff" stroke="#444" />
      <path d="M1 1h14v3H1z" fill="#444" />
      <path d="M3 7h2M3 11h2" stroke="#333" strokeWidth="1.500" />
      <path d="M6 7h7M6 11h7" stroke="#1e88d8" strokeWidth="1.500" />
    </g>
  ),
  'Place components': (
    <g>
      <path d="M1 1h7v7H1z" fill="#55c3cf" stroke="#2f8f9a" />
      <path d="M1 8h6v6H1zM8 5h6v4" fill="none" stroke="#555" />
      <path d="M12 8v8M8 12h8" stroke="#2ea84f" strokeWidth="2" />
    </g>
  ),
  Errors: (
    <g>
      <path d="M8 1l7.500 14H.5z" fill="#fdb913" stroke="#d99a00" />
      <path d="M8 5v5M8 11.500v2" stroke="#333" strokeWidth="1.800" />
    </g>
  ),
  'Design review': (
    <g fill="none">
      <path d="M1 1h12v12H1z" fill="#fff" stroke="#555" />
      <path d="M2 4l3-3M4 12l8-10M2 7h3M7 1v3" stroke="#555" />
      <circle cx="9" cy="8" r="4" fill="#c9eef2" stroke="#666" />
      <path d="M12 12l3 4" stroke="#c0504d" strokeWidth="1.500" />
    </g>
  ),
};

const LayerRow = ({ layer }: { layer: Layer }) => {
  const selected = layer.code === 'ct';
  const cell = selected ? 'bg-[#97d3ee]' : '';
  return (
    <tr className={`h-[30px] ${selected ? 'bg-[#e0f1fa]' : ''}`}>
      <td />
      <td className={cell}>
        <button aria-label={`Toggle ${layer.name}`} className="block w-full">
          {selected ? <EyeOn /> : <EyeOff />}
        </button>
      </td>
      <td className={cell}>
        <button aria-label={`Lock ${layer.name}`} className="block w-full">
          <Unlock />
        </button>
      </td>
      <td className={cell}>
        <SwatchIcon swatch={layer.swatch} />
      </td>
      <td>{layer.code}</td>
      <td className="overflow-hidden whitespace-nowrap">{layer.name}</td>
      <td className={cell}>
        <input
          type="radio"
          name="active-layer"
          aria-label={`Activate ${layer.name}`}
          defaultChecked={layer.code === 'm1'}
          className="block mx-auto w-3.5 h-3.5 appearance-none rounded-full border border-[#dcdcdc] bg-white checked:bg-[#6b9a23] checked:shadow-[inset_0_0_0_2px_white]"
        />
      </td>
    </tr>
  );
};

const LayerPanel = () => (
  <aside className="w-[376px] shrink-0 flex flex-col pt-3 text-[13px] text-[#444]">
    <div className="flex items-center h-6">
      <button className="w-[124px] h-full flex items-center gap-1.5 pl-[11px] bg-white text-xs text-[#333] whitespace-nowrap">
        <MiniStack />
        DISPLAY LAY...
      </button>
      <div className="flex h-full w-[211px] bg-[#ececec]">
        {Object.entries(panelTabs).map(([name, drawing]) => (
          <button key={name} aria-label={name} className="w-[42px] flex items-center justify-center">
            <svg viewBox="0 0 16 16" className="w-4 h-4">
              {drawing}
            </svg>
          </button>
        ))}
      </div>
      <button aria-label="Panel menu" className="ml-auto mr-[7px] text-[#777]">
        <Dots className="w-1 h-4" />
      </button>
    </div>
    <div className="flex-1 min-h-0 flex flex-col mr-1 px-3 border border-b-0 border-[#e2e2e2]">
      <div className="flex items-center h-[43px] pt-1">
        <label htmlFor="layer-set" className="w-[70px] pl-[3px] whitespace-nowrap">
          Layer Set
        </label>
        <div className="relative w-[202px] h-[22px] flex items-center bg-white border border-[#e0e0e0]">
          <select id="layer-set" className="w-full h-full appearance-none pl-2 bg-transparent text-[#333]" defaultValue="all">
            <option value="all">AllLayers</option>
          </select>
          <span className="absolute right-1.5">
            <Caret />
          </span>
        </div>
        <button aria-label="Edit layer sets" className="ml-[18px]">
          <MiniStack gear />
        </button>
        <button aria-label="Layer options" className="ml-[26px] text-[#aaa]">
          <Dots className="w-[3px] h-2.5" />
        </button>
      </div>
      <div className="flex-1 min-h-0 overflow-hidden bg-white border border-[#e4e4e4]">
        <table className="w-full table-fixed border-collapse">
          <colgroup>
            <col className="w-[30px]" />
            <col className="w-9" />
            <col className="w-11" />
            <col className="w-[30px]" />
            <col className="w-[31px]" />
            <col />
            <col className="w-[30px]" />
          </colgroup>
          <thead>
            <tr className="h-[34px] bg-[#e3e3e3]">
              <td />
              <td>
                <div className="mx-auto w-3 h-0.5 bg-[#888]" />
              </td>
              <td>
                <Unlock />
              </td>
              <td colSpan={4} />
            </tr>
          </thead>
          {layerGroups.map((group) => (
            <tbody key={group.name}>
              <tr className="h-[30px] bg-[#f1f1f1]">
                <td>
                  <button aria-label={`Collapse ${group.name}`} className="block mx-auto">
                    <Caret className="text-[#888]" />
                  </button>
                </td>
                <td>
                  <EyeOff />
                </td>
                <td>
                  <Unlock />
                </td>
                <td colSpan={4}>{group.name}</td>
              </tr>
              {group.layers.map((layer) => (
                <LayerRow key={layer.code} layer={layer} />
              ))}
            </tbody>
          ))}
        </table>
      </div>
      <div className="flex h-5 shrink-0 bg-white border border-t-0 border-[#e4e4e4] text-[#555]">
        <button aria-label="Add layer" className="w-5 flex items-center justify-center border-r border-[#e4e4e4]">
          <Plus className="w-6 h-6 shrink-0" strokeWidth={2} />
        </button>
        <button aria-label="Delete layer" className="w-5 flex items-center justify-center border-r border-[#e4e4e4]">
          <X className="w-6 h-6 shrink-0" strokeWidth={1} />
        </button>
      </div>
      <button className="flex items-center gap-2.5 h-[47px] shrink-0 pl-[5px] text-[#333] font-medium">
        <svg viewBox="0 0 5 8" className="w-[5px] h-2" fill="#777">
          <path d="M0 0l5 4-5 4z" />
        </svg>
        Details
      </button>
    </div>
  </aside>
);

/* ---------- settings dialog ---------- */

const Check = ({ label, checked }: { label: string; checked: boolean }) => (
  <label className="flex items-center gap-2 whitespace-nowrap">
    <span className="relative w-3 h-3">
      <input
        type="checkbox"
        defaultChecked={checked}
        className="peer block w-3 h-3 appearance-none bg-white border border-[#b5b5b5] checked:bg-[#808080] checked:border-[#808080]"
      />
      <svg viewBox="0 0 12 12" className="absolute inset-0 w-3 h-3 hidden peer-checked:block pointer-events-none" fill="none">
        <path d="M3 6l2.200 2.500L9 3.500" stroke="#fff" strokeWidth="1.600" />
      </svg>
    </span>
    {label}
  </label>
);

const fields = [
  { check: 'Beep', checked: true, label: 'Min. visible text size', value: '3', unit: 'pixel' },
  { check: 'Check connects', checked: true, label: 'Min. visible grid size', value: '5', unit: 'pixel' },
  { check: 'Optimizing', checked: true, label: 'Catch factor', value: '5', unit: '%' },
  { check: 'Ratsnest processes polygons', checked: false, label: 'Select factor', value: '2', unit: '%' },
  { check: 'Display pad names', checked: false, label: 'Snap length', value: '20 mil', unit: '' },
  { check: 'Display signal names on pads', checked: false, label: 'Xref label format', value: '%F%N/%S.%C%R', unit: '' },
  { check: 'Display signal names on traces', checked: false, label: 'Xref part format', value: '/%S.%C%R', unit: '' },
];

const moreChecks: [string, boolean][] = [
  ['Display via lengths', false],
  ['Display drills', false],
  ['Auto end net and bus', true],
  ['Auto set junction', true],
  ['Group command default on', true],
  ['Enable GPU rendering', true],
  ['Enable HiDPI (GPU rendering)', true],
];

const settingsTabs = ['Colors', 'Misc', 'Grid', 'Defaults', 'Drill Legend'];

const SettingsDialog = () => (
  <div
    role="dialog"
    aria-label="Settings"
    className="absolute left-[938px] top-[13px] w-[636px] h-[814px] flex flex-col rounded-[18px] overflow-hidden bg-[#f5f5f5] text-[13px] text-[#444]"
  >
    <div className="flex items-center h-8 shrink-0 pl-[9px] pt-px gap-[9px] bg-white border-b border-[#e2e2e2]">
      <button aria-label="Close" className="w-3.5 h-3.5 rounded-full bg-[#ec6765] border border-[#dc5553]" />
      <button aria-label="Minimize" className="w-3.5 h-3.5 rounded-full bg-[#dcdcdc] border border-[#d0d0d0]" />
      <button aria-label="Zoom" className="w-3.5 h-3.5 rounded-full bg-[#dcdcdc] border border-[#d0d0d0]" />
      <h2 className="ml-1.5 font-bold text-[#4a4a4a] [font-family:Inter,sans-serif]">Settings</h2>
    </div>
    <div className="flex mx-5 mt-[18px] h-8 border-b border-[#c8c8c8]">
      {settingsTabs.map((tab) => (
        <button
          key={tab}
          className={`w-[100px] h-8 pt-0.5 border-b-2 ${tab === 'Misc' ? 'font-bold border-[#1a90cc] text-[#333]' : 'border-transparent'}`}
        >
          {tab}
        </button>
      ))}
    </div>
    <div className="pl-[46px] pt-[11px]">
      {fields.map((f) => (
        <div key={f.label} className="grid grid-cols-[222px_128px_156px_auto] items-center h-[39px]">
          <Check label={f.check} checked={f.checked} />
          <label htmlFor={f.label} className="whitespace-nowrap">
            {f.label}
          </label>
          <input id={f.label} defaultValue={f.value} className="h-[29px] w-full px-2.5 bg-white border border-[#e0e0e0] text-[#333]" />
          <span className="pl-[13px]">{f.unit}</span>
        </div>
      ))}
      <div className="pt-px">
        {moreChecks.map(([label, checked]) => (
          <div key={label} className="flex items-center h-[34px]">
            <Check label={label} checked={checked} />
          </div>
        ))}
      </div>
    </div>
    <div className="mt-auto mb-[19px] mr-5 flex justify-end gap-3.5">
      <button className="w-16 h-[25px] rounded-sm border border-[#b0b0b0] text-[#333]">Cancel</button>
      <button className="w-16 h-[25px] rounded-sm bg-[#0795d8] text-white font-medium">OK</button>
    </div>
  </div>
);

const App: React.FC = () => {
  return (
    <div className="relative h-screen flex flex-col overflow-hidden bg-[#f4f4f4] [font-family:Roboto,'Noto_Sans',sans-serif]">
      <div className="h-[13px] shrink-0 bg-black" />
      <TitleBar />
      <Ribbon />
      <div className="flex flex-1 min-h-0">
        <main className="flex-1 min-w-0 flex flex-col">
          <CommandBar />
          <div className="flex flex-1 min-h-0">
            <div className="relative flex-1 bg-[#282828] overflow-hidden">
              <BoardCanvas />
              <ViewToolbar />
            </div>
            <div className="w-[17px] pl-0.5 pt-22 pb-[17px]">
              <div className="w-1.5 h-full rounded-full bg-[#dedede]" />
            </div>
          </div>
          <div className="h-10 shrink-0 pt-0.5 pl-[100px] pr-[17px]">
            <div className="h-1.5 rounded-full bg-[#dedede]" />
          </div>
        </main>
        <LayerPanel />
      </div>
      <SettingsDialog />
    </div>
  );
};

export default App;
